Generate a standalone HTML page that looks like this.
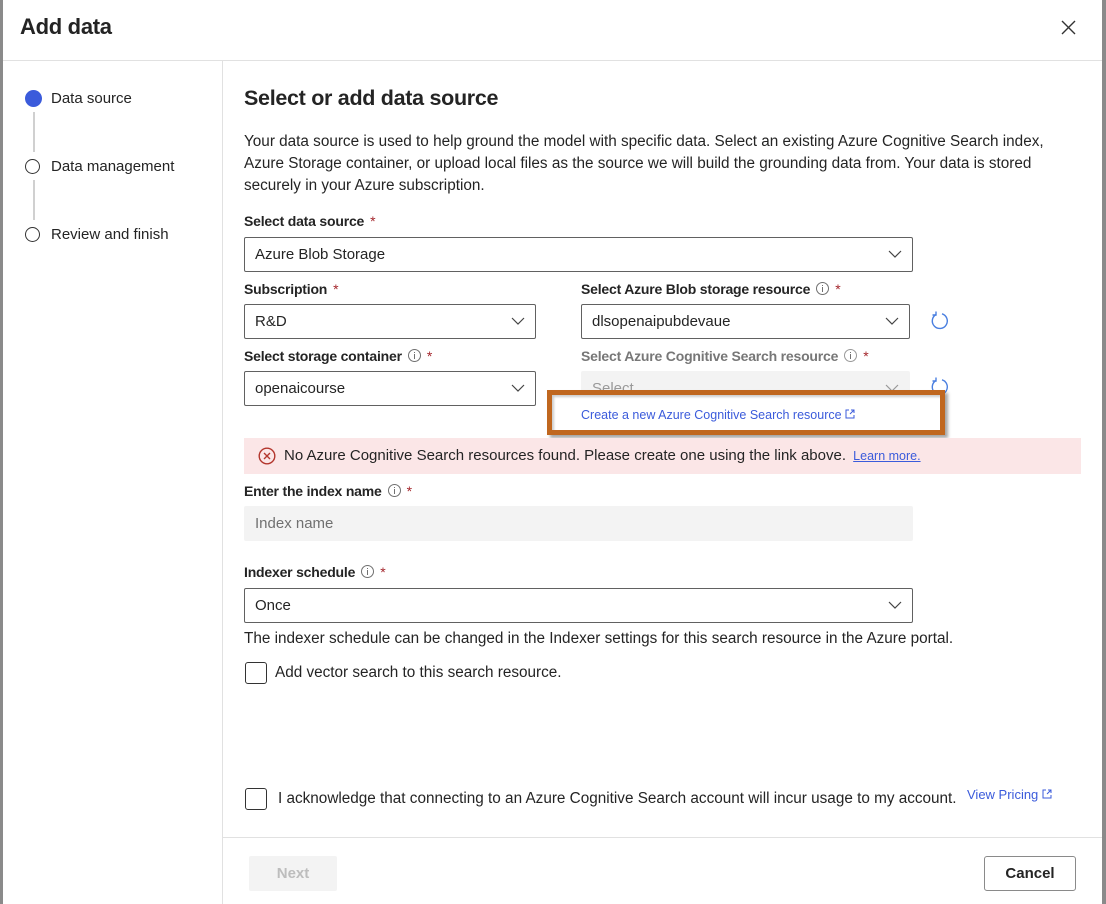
<!DOCTYPE html>
<html><head><meta charset="utf-8"><style>
*{box-sizing:border-box;margin:0;padding:0}
body{width:1106px;height:904px;background:#8a8a8a;font-family:"Liberation Sans",sans-serif;color:#242424;position:relative;overflow:hidden;font-size:15.3px}
.dlg{position:absolute;left:3px;top:0;width:1099px;height:904px;background:#fff}
.a{position:absolute;white-space:nowrap}
.lbl{font-weight:bold;font-size:14px;letter-spacing:-0.2px}
.req{color:#a4262c;font-weight:normal;margin-left:6px}
.info{display:inline-block;width:13px;height:13px;border:1px solid #707070;border-radius:50%;vertical-align:-1px;margin-left:6px;position:relative}
.info:after{content:"";position:absolute;left:5px;top:4px;width:1px;height:5px;background:#707070}
.info:before{content:"";position:absolute;left:5px;top:2px;width:1px;height:1px;background:#707070}
.sel{position:absolute;border:1px solid #616161;border-radius:2px;height:35px;padding:0 10px;line-height:33px;font-size:15px}
.chev{position:absolute;right:10px;top:10px;width:14px;height:10px}
.dis{background:#f3f3f3;border-color:#f3f3f3;color:#999}
.cb{position:absolute;width:22px;height:22px;border:1px solid #333;border-radius:3px}
</style></head><body>
<div class="dlg">
<div class="a" style="left:17px;top:14px;font-size:22px;font-weight:bold;letter-spacing:-0.3px">Add data</div>
<svg class="a" style="left:1058px;top:20px" width="15" height="15"><path d="M1 1L14 14M14 1L1 14" stroke="#333" stroke-width="1.4"/></svg>
<div class="a" style="left:0;top:60px;width:1099px;height:1px;background:#e1e1e1"></div>
<div class="a" style="left:219px;top:61px;width:1px;height:843px;background:#e1e1e1"></div>
<div class="a" style="top:837px;height:1px;background:#e1e1e1;left:219px;width:880px"></div>
<div class="a" style="left:22px;top:90px;width:17px;height:17px;border-radius:50%;background:#3b5bdb"></div>
<div class="a" style="left:30px;top:112px;width:2px;height:40px;background:#d0d0d0"></div>
<div class="a" style="left:22px;top:159px;width:15px;height:15px;border-radius:50%;border:1.5px solid #333"></div>
<div class="a" style="left:30px;top:180px;width:2px;height:40px;background:#d0d0d0"></div>
<div class="a" style="left:22px;top:227px;width:15px;height:15px;border-radius:50%;border:1.5px solid #333"></div>
<div class="a" style="left:48px;top:90px;font-size:15px">Data source</div>
<div class="a" style="left:48px;top:158px;font-size:15px">Data management</div>
<div class="a" style="left:48px;top:226px;font-size:15px">Review and finish</div>
<div class="a" style="left:241px;top:86px;font-size:21.5px;font-weight:bold;letter-spacing:-0.3px">Select or add data source</div>
<div class="a" style="left:241px;top:131px;line-height:22px">Your data source is used to help ground the model with specific data. Select an existing Azure Cognitive Search index,<br>Azure Storage container, or upload local files as the source we will build the grounding data from. Your data is stored<br>securely in your Azure subscription.</div>
<div class="a lbl" style="left:241px;top:213px">Select data source<span class="req">*</span></div>
<div class="sel" style="left:241px;top:237px;width:669px">Azure Blob Storage<svg class="chev" viewBox="0 0 14 10"><path d="M1 3l6 6 6-6" fill="none" stroke="#444" stroke-width="1.2"/></svg></div>
<div class="a lbl" style="left:241px;top:281px">Subscription<span class="req">*</span></div>
<div class="sel" style="left:241px;top:304px;width:292px">R&amp;D<svg class="chev" viewBox="0 0 14 10"><path d="M1 3l6 6 6-6" fill="none" stroke="#444" stroke-width="1.2"/></svg></div>
<div class="a lbl" style="left:578px;top:281px">Select Azure Blob storage resource<span class="info"></span><span class="req">*</span></div>
<div class="sel" style="left:578px;top:304px;width:329px">dlsopenaipubdevaue<svg class="chev" viewBox="0 0 14 10"><path d="M1 3l6 6 6-6" fill="none" stroke="#444" stroke-width="1.2"/></svg></div>
<svg class="a" style="left:927px;top:311px" width="20" height="20"><path d="M6 3.5A7.5 7.5 0 1 0 12 2.8" fill="none" stroke="#4a7fe0" stroke-width="1.4"/><path d="M6 0.5v3.5h-3.5" fill="none" stroke="#4a7fe0" stroke-width="1.4"/></svg>
<div class="a lbl" style="left:241px;top:348px">Select storage container<span class="info"></span><span class="req">*</span></div>
<div class="sel" style="left:241px;top:371px;width:292px">openaicourse<svg class="chev" viewBox="0 0 14 10"><path d="M1 3l6 6 6-6" fill="none" stroke="#444" stroke-width="1.2"/></svg></div>
<div class="a lbl" style="left:578px;top:348px;color:#777">Select Azure Cognitive Search resource<span class="info" style="border-color:#999"></span><span class="req">*</span></div>
<div class="sel dis" style="left:578px;top:371px;width:329px">Select<svg class="chev" viewBox="0 0 14 10"><path d="M1 3l6 6 6-6" fill="none" stroke="#999" stroke-width="1.2"/></svg></div>
<svg class="a" style="left:927px;top:377px" width="20" height="20"><path d="M6 3.5A7.5 7.5 0 1 0 12 2.8" fill="none" stroke="#4a7fe0" stroke-width="1.4"/><path d="M6 0.5v3.5h-3.5" fill="none" stroke="#4a7fe0" stroke-width="1.4"/></svg>
<div class="a" style="left:544px;top:390px;width:398px;height:45px;border:5px solid #c0671f;background:#fff;box-shadow:3px 3px 3px rgba(0,0,0,0.35), inset 2px 2px 2px rgba(0,0,0,0.2)"></div>
<div class="a" style="left:578px;top:408px;font-size:12.5px;color:#3b5bdb">Create a new Azure Cognitive Search resource <svg width="10" height="10" style="vertical-align:0"><path d="M4 1H1v8h8V6M6 1h3v3M9 1L5 5" fill="none" stroke="#3b5bdb" stroke-width="1"/></svg></div>
<div class="a" style="left:241px;top:438px;width:837px;height:36px;background:#fbe6e7"></div>
<svg class="a" style="left:255px;top:447px" width="18" height="18"><circle cx="9" cy="9" r="7.8" fill="none" stroke="#b3362d" stroke-width="1.4"/><path d="M6 6l6 6M12 6l-6 6" stroke="#b3362d" stroke-width="1.4"/></svg>
<div class="a" style="left:281px;top:447px;font-size:15px">No Azure Cognitive Search resources found. Please create one using the link above. <span style="font-size:12.5px;color:#3b5bdb;text-decoration:underline;margin-left:3px">Learn more.</span></div>
<div class="a lbl" style="left:241px;top:483px">Enter the index name<span class="info"></span><span class="req">*</span></div>
<div class="sel dis" style="left:241px;top:506px;width:669px;color:#707070">Index name</div>
<div class="a lbl" style="left:241px;top:564px">Indexer schedule<span class="info"></span><span class="req">*</span></div>
<div class="sel" style="left:241px;top:588px;width:669px">Once<svg class="chev" viewBox="0 0 14 10"><path d="M1 3l6 6 6-6" fill="none" stroke="#444" stroke-width="1.2"/></svg></div>
<div class="a" style="left:241px;top:630px">The indexer schedule can be changed in the Indexer settings for this search resource in the Azure portal.</div>
<div class="cb" style="left:242px;top:662px"></div>
<div class="a" style="left:272px;top:664px">Add vector search to this search resource.</div>
<div class="cb" style="left:242px;top:788px"></div>
<div class="a" style="left:275px;top:790px">I acknowledge that connecting to an Azure Cognitive Search account will incur usage to my account.</div>
<div class="a" style="left:964px;top:787px;font-size:13px;color:#3b5bdb">View Pricing <svg width="10" height="10"><path d="M4 1H1v8h8V6M6 1h3v3M9 1L5 5" fill="none" stroke="#3b5bdb" stroke-width="1"/></svg></div>
<div class="a" style="left:246px;top:856px;width:88px;height:35px;background:#f3f3f3;border-radius:2px;color:#bdbdbd;font-weight:bold;font-size:15px;text-align:center;line-height:35px">Next</div>
<div class="a" style="left:981px;top:856px;width:92px;height:35px;border:1px solid #8a8a8a;border-radius:3px;font-weight:bold;font-size:15px;text-align:center;line-height:33px">Cancel</div>
</div>
</body></html>
